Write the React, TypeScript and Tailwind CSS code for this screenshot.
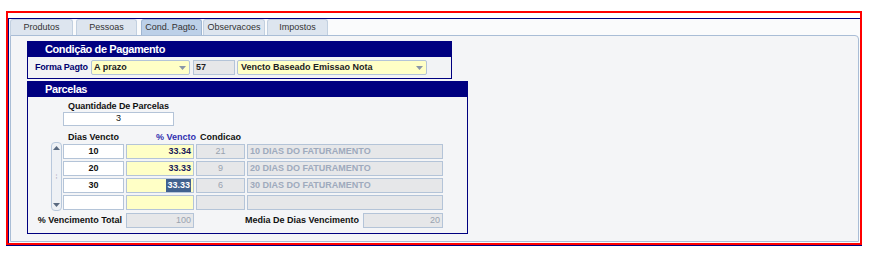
import React from "react";

const font = { fontFamily: '"Liberation Sans", Arial, sans-serif' };

function Tab({ label, w, ml, selected }: { label: string; w: string; ml: string; selected?: boolean }) {
  return (
    <div
      className={`${w} ${ml} h-[16px] rounded-t-[3px] border border-b-0 flex items-center justify-center text-[9px] text-[#333] ${
        selected ? "bg-[#bcd0e8] border-[#9fb6d2]" : "bg-[#dde5ef] border-[#c2d0e0]"
      }`}
    >
      {label}
    </div>
  );
}

function Arrow() {
  return (
    <svg width="7" height="4" viewBox="0 0 7 4" className="shrink-0">
      <path d="M0 0 L7 0 L3.5 4 Z" fill="#8a96a8" />
    </svg>
  );
}

export default function App() {
  const rows = [
    { d: "10", p: "33.34", c: "21", t: "10 DIAS DO FATURAMENTO" },
    { d: "20", p: "33.33", c: "9", t: "20 DIAS DO FATURAMENTO" },
    { d: "30", p: "33.33", c: "6", t: "30 DIAS DO FATURAMENTO", sel: true },
    { d: "", p: "", c: "", t: "" },
  ];
  return (
    <div className="w-[879px] h-[263px] bg-white overflow-hidden" style={font}>
      <div className="pt-[11px] pl-[6px]">
        <div className="w-[856px] h-[234px] border-2 border-[#ff0000] shadow-[0_1px_0_#000080] flex flex-col">
          <div className="h-[5px] shrink-0" />
          <div className="flex-1 border-t border-l border-[#000080] flex flex-col bg-[#fafbfc]">
            <div className="flex h-[16px] shrink-0">
              <Tab label="Produtos" w="w-[63px]" ml="ml-[1px]" />
              <Tab label="Pessoas" w="w-[61px]" ml="ml-[3px]" />
              <Tab label="Cond. Pagto." w="w-[61px]" ml="ml-[4px]" selected />
              <Tab label="Observacoes" w="w-[62px]" ml="ml-[1px]" />
              <Tab label="Impostos" w="w-[61px]" ml="ml-[2px]" />
            </div>
            <div className="flex-1 ml-[1px] mr-[1px] mb-[1px] border border-[#a9bdd6] rounded-tr-[4px] bg-[#f4f5f7] pl-[16px] pt-[5px]">
              {/* Condição de Pagamento */}
              <div className="w-[425px]">
                <div className="h-[16px] bg-[#000080] text-white text-[11px] font-bold tracking-[-0.4px] pl-[18px] flex items-center leading-none">
                  Condição de Pagamento
                </div>
                <div className="h-[22px] border border-t-0 border-[#000080] flex items-center pl-[7px] bg-[#f2f3f5]">
                  <span className="text-[9px] font-bold text-[#00006e] w-[56px] tracking-[-0.2px] whitespace-nowrap">Forma Pagto</span>
                  <div className="w-[99px] h-[15px] border border-[#b4c4d8] bg-[#ffffc6] rounded-[2px] flex items-center pl-[2px] pr-[3px]">
                    <span className="flex-1 text-[9px] font-bold text-[#222]">A prazo</span>
                    <Arrow />
                  </div>
                  <div className="ml-[3px] w-[42px] h-[15px] border border-[#b4c4d8] bg-[#e6e7e9] flex items-center pl-[2px] text-[9px] font-bold text-[#222]">
                    57
                  </div>
                  <div className="ml-[2px] w-[190px] h-[15px] border border-[#b4c4d8] bg-[#ffffc6] rounded-[2px] flex items-center pl-[3px] pr-[3px]">
                    <span className="flex-1 text-[9px] font-bold text-[#222]">Vencto Baseado Emissao Nota</span>
                    <Arrow />
                  </div>
                </div>
              </div>
              {/* Parcelas */}
              <div className="w-[441px] mt-[2px] border border-t-0 border-[#000080] h-[153px] flex flex-col">
                <div className="h-[16px] bg-[#000080] text-white text-[11px] font-bold tracking-[-0.4px] pl-[18px] flex items-center leading-none -mx-[1px]">
                  Parcelas
                </div>
                <div className="flex-1 bg-[#f4f5f7] relative">
                  <div className="pl-[40px] pt-[4px] text-[9px] font-bold text-[#111] leading-[11px] tracking-[-0.1px]">
                    Quantidade De Parcelas
                  </div>
                  <div className="ml-[35px] w-[111px] h-[14px] border border-[#b4c4d8] bg-white flex items-center justify-center text-[9px] text-[#111]">
                    3
                  </div>
                  <div className="flex mt-[6px] text-[9px] font-bold leading-[11px]">
                    <span className="pl-[40px] w-[128px] text-[#111]">Dias Vencto</span>
                    <span className="w-[40px] text-right text-[#3030b0]">% Vencto</span>
                    <span className="ml-[4px] text-[#111]">Condicao</span>
                  </div>
                  <div className="flex mt-[1px] ml-[23px]">
                    <div className="w-[11px] h-[69px] -mt-[2px] border border-[#b8c8dc] rounded-[4px] bg-[#eef1f5] flex flex-col items-center justify-between py-[3px]">
                      <svg width="7" height="4" viewBox="0 0 7 4"><path d="M0 4 L7 4 L3.5 0 Z" fill="#5a6a80" /></svg>
                      <span className="text-[7px] text-[#aab] leading-none">⁞</span>
                      <svg width="7" height="4" viewBox="0 0 7 4"><path d="M0 0 L7 0 L3.5 4 Z" fill="#5a6a80" /></svg>
                    </div>
                    <div className="ml-[1px] flex flex-col gap-[2px]">
                      {rows.map((r, i) => (
                        <div key={i} className="flex h-[15px] text-[9px] font-bold">
                          <div className="w-[61px] border border-[#b4c4d8] bg-white flex items-center justify-center text-[#111]">
                            {r.d}
                          </div>
                          <div className="ml-[2px] w-[68px] border border-[#b4c4d8] bg-[#ffffc6] flex items-center justify-end pr-[2px] text-[#1a1a5a]">
                            {r.sel ? <span className="bg-[#41618f] text-white px-[1px]">{r.p}</span> : r.p}
                          </div>
                          <div className="ml-[2px] w-[49px] border border-[#b4c4d8] bg-[#e6e7e9] flex items-center justify-center text-[#9aa3b0] font-normal">
                            {r.c}
                          </div>
                          <div className="ml-[2px] w-[196px] border border-[#b4c4d8] bg-[#e6e7e9] flex items-center pl-[2px] text-[#9eaabd]">
                            {r.t}
                          </div>
                        </div>
                      ))}
                    </div>
                  </div>
                  <div className="flex items-center mt-[2px] text-[9px] font-bold">
                    <span className="w-[98px] text-right pr-[4px] text-[#111]">% Vencimento Total</span>
                    <div className="w-[68px] h-[15px] border border-[#b4c4d8] bg-[#e6e7e9] flex items-center justify-end pr-[2px] text-[#9aa3b0] font-normal">
                      100
                    </div>
                    <span className="w-[169px] text-right pr-[4px] text-[#111]">Media De Dias Vencimento</span>
                    <div className="w-[80px] h-[15px] border border-[#b4c4d8] bg-[#e6e7e9] flex items-center justify-end pr-[2px] text-[#9aa3b0] font-normal">
                      20
                    </div>
                  </div>
                </div>
              </div>
            </div>
          </div>
        </div>
      </div>
    </div>
  );
}
